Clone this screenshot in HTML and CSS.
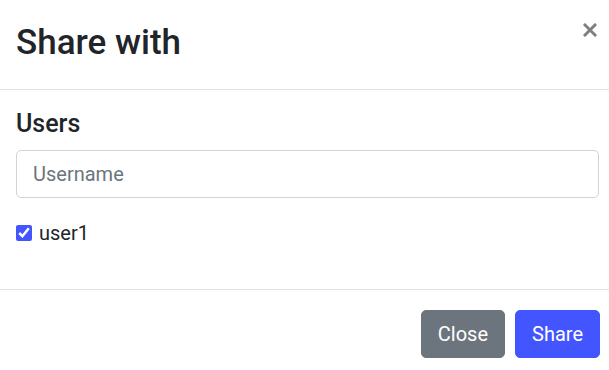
FILE: index.html
```html
<!DOCTYPE html>
<html lang="en">
<head>
<meta charset="utf-8">
<title>Share with</title>
<link rel="stylesheet" href="styles.css">
</head>
<body>
<div class="modal">
  <div class="modal-header">
    <h2 class="modal-title">Share with</h2>
    <button class="close" type="button" aria-label="Close">
      <svg width="14" height="14" viewBox="0 0 14 14" aria-hidden="true">
        <path d="M2 2 L12 12 M12 2 L2 12" stroke="#808080" stroke-width="3" stroke-linecap="square" fill="none"/>
      </svg>
    </button>
  </div>
  <div class="modal-body">
    <h4 class="section-label">Users</h4>
    <input class="form-control" type="text" placeholder="Username">
    <label class="check-row">
      <input type="checkbox" class="check" checked>
      <span>user1</span>
    </label>
  </div>
  <div class="modal-footer">
    <button class="btn btn-secondary" type="button">Close</button>
    <button class="btn btn-primary" type="button">Share</button>
  </div>
</div>
</body>
</html>
```

FILE: styles.css
```css
* { box-sizing: border-box; }

html, body {
  margin: 0;
  padding: 0;
  background: #fff;
}

body {
  font-family: Roboto, "Liberation Sans", Arial, sans-serif;
  font-size: 20px;
  line-height: 1.5;
  color: #212529;
}

.modal {
  width: 609px;
  background: #fff;
}

.modal-header {
  display: flex;
  align-items: flex-start;
  justify-content: space-between;
  padding: 22px 10px 25px 16px;
  border-bottom: 1px solid #dee2e6;
}

.modal-title {
  margin: 0;
  font-size: 35px;
  font-weight: 500;
  line-height: 42px;
  color: #212529;
}

.close {
  display: flex;
  padding: 0;
  margin: 1px 2px 0 0;
  border: 0;
  background: transparent;
  cursor: pointer;
}

.modal-body {
  display: flex;
  flex-direction: column;
  padding: 19px 10px 41px 16px;
}

.section-label {
  margin: 0 0 11px;
  font-size: 25px;
  font-weight: 500;
  line-height: 30px;
  color: #212529;
}

.form-control {
  display: block;
  width: 100%;
  height: 48px;
  padding: 0 16px;
  font-family: inherit;
  font-size: 20px;
  color: #495057;
  border: 1px solid #ced4da;
  border-radius: 5px;
  background: #fff;
  outline: none;
}

.form-control::placeholder {
  color: #6c757d;
  opacity: 1;
}

.check-row {
  display: flex;
  align-items: center;
  margin-top: 20px;
  height: 30px;
  font-size: 20px;
  line-height: 30px;
}

.check {
  width: 16px;
  height: 16px;
  margin: 0 7px 0 0;
  accent-color: #4255ff;
}

.modal-footer {
  display: flex;
  justify-content: flex-end;
  gap: 10px;
  padding: 20px 9px 12px 16px;
  border-top: 1px solid #dee2e6;
}

.btn {
  height: 48px;
  padding: 0 16px;
  font-family: inherit;
  font-size: 20px;
  line-height: 46px;
  color: #fff;
  border: 1px solid transparent;
  border-radius: 5px;
  cursor: pointer;
}

.btn-secondary {
  background: #6c757d;
  border-color: #6c757d;
}

.btn-primary {
  background: #4255ff;
  border-color: #4255ff;
}
```
